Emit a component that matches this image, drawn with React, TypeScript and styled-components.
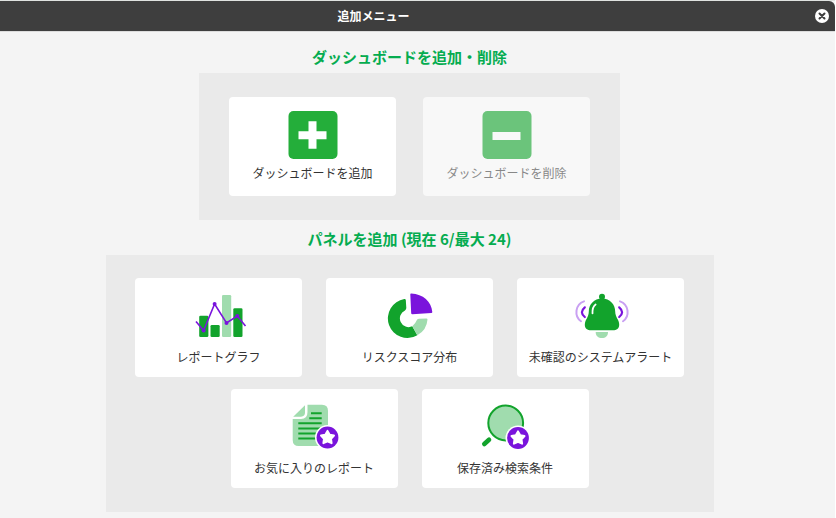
import React from 'react';
import styled, { createGlobalStyle } from 'styled-components';

const GlobalStyle = createGlobalStyle`
  *, *::before, *::after { box-sizing: border-box; }
  body {
    margin: 0;
    background: #ffffff;
    color: #333333;
    font-family: 'Noto Sans CJK JP', 'Noto Sans', sans-serif;
  }
`;

const GREEN = '#12a32c';
const PALE = '#a0dcae';
const PURPLE = '#7a14dc';

const Dialog = styled.div`
  display: flex;
  flex-direction: column;
  min-height: 100vh;
  margin-right: 1px;
  border-top: 1px solid #dfe2e0;
  background: #f4f4f4;
`;

const TitleBar = styled.header`
  display: flex;
  align-items: center;
  height: 30px;
  padding: 0 6px 0 0;
  border-radius: 0 6px 0 0;
  background: #3e3e3e;
  box-shadow: 0 1px 0 #dcdcdc;
`;

const Title = styled.h1`
  flex: 1;
  margin: 0;
  padding-left: 68px;
  padding-right: 136px;
  color: #ffffff;
  font-size: 12px;
  line-height: 34px;
  font-weight: 700;
  text-align: center;
`;

const CloseButton = styled.button`
  display: flex;
  padding: 0;
  border: 0;
  background: transparent;
  cursor: pointer;
`;

const Content = styled.main`
  display: flex;
  flex-direction: column;
  align-items: center;
  gap: 3px;
  padding: 10px 16px 6px 0;
`;

const Section = styled.section<{ $wide?: boolean }>`
  width: 100%;
  max-width: ${({ $wide }) => ($wide ? 608 : 421)}px;
`;

const SectionTitle = styled.h2`
  margin: 0;
  color: #05ac50;
  font-size: 15px;
  line-height: 32px;
  font-weight: 700;
  text-align: center;
`;

const Panel = styled.div<{ $wide?: boolean }>`
  display: flex;
  flex-wrap: wrap;
  justify-content: center;
  gap: ${({ $wide }) => ($wide ? '12px 24px' : '12px 27px')};
  padding: ${({ $wide }) => ($wide ? '23px 28px 24px' : '24px 28px')};
  background: #eaeaea;
`;

const Card = styled.button`
  display: flex;
  flex-direction: column;
  align-items: center;
  width: 167px;
  height: 99px;
  padding: 7px 0 0;
  border: 0;
  border-radius: 4px;
  background: #ffffff;
  color: #333333;
  font-family: inherit;
  font-size: 12px;
  line-height: 24px;
  cursor: pointer;

  &:disabled {
    background: #f8f8f8;
    color: #888888;
    cursor: default;
  }
`;

const Icon = styled.svg`
  display: block;
  flex: none;
`;

const AddIcon = () => (
  <Icon width="80" height="57" viewBox="0 0 80 57" aria-hidden="true">
    <rect x="15.5" y="7" width="49" height="48" rx="5" fill="#24ae3a" />
    <path d="M35.5 17.300h8v10h10v8h-10v9.500h-8v-9.500h-10v-8h10z" fill="#fff" />
  </Icon>
);

const RemoveIcon = () => (
  <Icon width="80" height="57" viewBox="0 0 80 57" aria-hidden="true">
    <rect x="15.5" y="7" width="49" height="48" rx="5" fill="#6bc47b" />
    <rect x="25.5" y="28" width="28" height="8" fill="#f8f8f8" />
  </Icon>
);

const ChartIcon = () => (
  <Icon width="80" height="60" viewBox="-1 0 80 60" aria-hidden="true">
    <g fill={GREEN}>
      <rect x="19.2" y="30.7" width="9.2" height="21.3" rx="1.3" />
      <rect x="30.5" y="40" width="9.2" height="12" rx="1.3" />
      <rect x="42" y="10" width="9.2" height="42" rx="1.3" fill={PALE} />
      <rect x="53.3" y="23.3" width="9.2" height="28.7" rx="1.3" />
    </g>
    <path d="M16 36.5 23.6 45.5 34.6 19 46.5 38 57.3 31 65.5 41" fill="none" stroke={PURPLE} strokeWidth="1.6" />
    <g fill={PURPLE}>
      <circle cx="23.6" cy="45.5" r="2" />
      <circle cx="34.6" cy="19" r="2" />
      <circle cx="46.5" cy="38" r="2" />
      <circle cx="57.3" cy="31" r="2" />
    </g>
  </Icon>
);

const PieIcon = () => (
  <Icon width="80" height="60" viewBox="0 0 80 60" aria-hidden="true">
    <path d="M34.3 14A19.6 19.6 0 1 0 47.3 50.3L42.3 41.3A8.3 8.3 0 1 1 35 25.4Q36.3 24.5 36.3 23L35.8 15Q35.6 13.8 34.3 14Z" fill={GREEN} />
    <path d="M47.3 50.3A19.6 19.6 0 0 0 57.5 34.5Q57.5 33.3 56.2 33.4L48.8 33.8Q47.2 34 46.6 35.5Q45.5 38.5 42.3 41.3Z" fill={PALE} />
    <path d="M40.3 9.5Q40.2 8.5 41.3 8.6C53 9 61.5 17 62.3 27Q62.3 28 61.3 28.1L42.3 29.3Q41.3 29.3 41.2 28.3Z" fill={PURPLE} />
  </Icon>
);

const BellIcon = () => (
  <Icon width="80" height="60" viewBox="0 0 80 60" aria-hidden="true">
    <circle cx="41" cy="11.8" r="3" fill={GREEN} />
    <path d="M41 13.5C33 13.5 27.8 19.5 27.8 26.5C27.8 32.5 23.8 34.5 23.8 39.8C23.8 43.6 26.5 45.3 30 45.3H52C55.5 45.3 58.2 43.6 58.2 39.8C58.2 34.5 54.2 32.5 54.2 26.5C54.2 19.500 49 13.5 41 13.5Z" fill={GREEN} />
    <path d="M34.7 47H47C47 51 44.500 53 40.9 53S34.7 51 34.7 47Z" fill={PALE} />
    <g fill="none" strokeWidth="2.2" strokeLinecap="round">
      <path d="M31.5 28.3Q31.2 22 34.6 19.5" stroke="#fff" strokeWidth="1.8" />
      <path d="M23.800 22.3Q18 27.2 23.800 32M58.200 22.3Q64 27.2 58.200 32" stroke={PURPLE} />
      <path d="M23 16.4C14 19.5 13 31.5 20 36.3M59 16.4C68 19.5 69 31.5 62 36.3" stroke="#c9a0f2" strokeWidth="2" />
    </g>
  </Icon>
);

const StarBadge = ({ cx, cy }: { cx: number; cy: number }) => (
  <g transform={`translate(${cx} ${cy})`}>
    <circle r="12.5" fill="#fff" />
    <circle r="10.9" fill={PURPLE} />
    <path d="M0-6.6 2.200-2.7 6.500-1.9 3.500 1.3 4.100 5.7 0 3.8-4.100 5.7-3.500 1.3-6.500-1.9-2.200-2.7Z" fill="#fff" stroke="#fff" strokeWidth="2" strokeLinejoin="round" />
  </g>
);

const ReportIcon = () => (
  <Icon width="80" height="60" viewBox="-1 1 80 60" aria-hidden="true">
    <path d="M32.5 9.7H47Q53 9.7 53 15.7V45Q53 51 47 51H23.7Q17.7 51 17.7 45V24H26Q32.5 24 32.5 17Z" fill={PALE} />
    <path d="M30 10.3V17.5Q30 21.5 26 21.7H18.2Z" fill={PALE} />
    <path d="M36 18.3H46.7M34.3 23.3H46.7M23.3 28.3H46.7M23.3 33.5H46.7M23.3 38.5H41M23.3 43.5H41" stroke={GREEN} strokeWidth="2" />
    <StarBadge cx={52.5} cy={42.5} />
  </Icon>
);

const SearchIcon = () => (
  <Icon width="80" height="60" viewBox="0 1 80 60" aria-hidden="true">
    <circle cx="40.7" cy="28" r="17.4" fill={PALE} stroke={GREEN} strokeWidth="2" />
    <path d="M24 44.800 19.300 49" stroke={GREEN} strokeWidth="4.6" strokeLinecap="round" />
    <StarBadge cx={53} cy={43} />
  </Icon>
);

const panels = [
  { label: 'レポートグラフ', Glyph: ChartIcon },
  { label: 'リスクスコア分布', Glyph: PieIcon },
  { label: '未確認のシステムアラート', Glyph: BellIcon },
  { label: 'お気に入りのレポート', Glyph: ReportIcon },
  { label: '保存済み検索条件', Glyph: SearchIcon },
];

export default function App() {
  return (
    <>
      <GlobalStyle />
      <Dialog role="dialog" aria-labelledby="menu-title">
        <TitleBar>
          <Title id="menu-title">追加メニュー</Title>
          <CloseButton type="button" aria-label="閉じる">
            <Icon width="14" height="14" viewBox="0 0 14 14" aria-hidden="true">
              <circle cx="7" cy="7" r="7" fill="#fff" />
              <path d="m4.5 4.5 5 5m0-5-5 5" stroke="#3e3e3e" strokeWidth="2" strokeLinecap="round" />
            </Icon>
          </CloseButton>
        </TitleBar>
        <Content>
          <Section>
            <SectionTitle>ダッシュボードを追加・削除</SectionTitle>
            <Panel>
              <Card type="button">
                <AddIcon />
                ダッシュボードを追加
              </Card>
              <Card type="button" disabled>
                <RemoveIcon />
                ダッシュボードを削除
              </Card>
            </Panel>
          </Section>
          <Section $wide>
            <SectionTitle>パネルを追加 (現在 6/最大 24)</SectionTitle>
            <Panel $wide>
              {panels.map(({ label, Glyph }) => (
                <Card type="button" key={label}>
                  <Glyph />
                  {label}
                </Card>
              ))}
            </Panel>
          </Section>
        </Content>
      </Dialog>
    </>
  );
}
